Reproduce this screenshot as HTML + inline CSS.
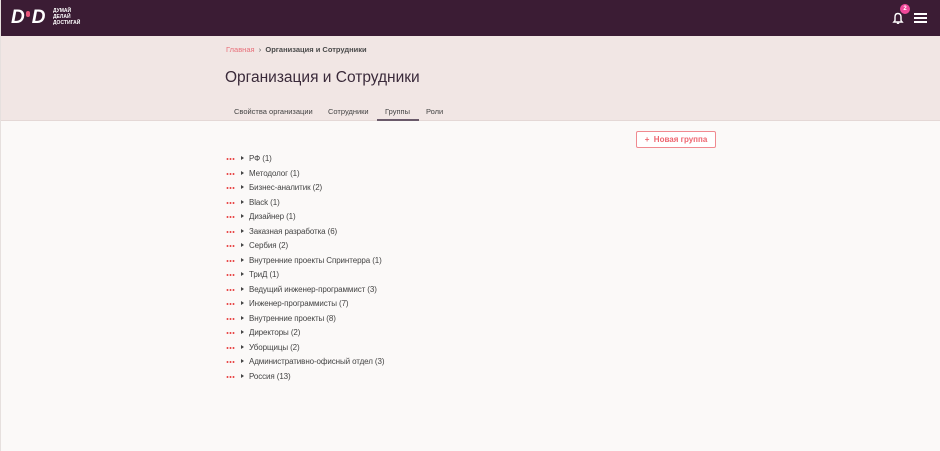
<!DOCTYPE html>
<html><head><meta charset="utf-8"><style>
*{margin:0;padding:0;box-sizing:border-box}
body{width:940px;height:451px;overflow:hidden;background:#fbf9f8;font-family:"Liberation Sans","DejaVu Sans",sans-serif;position:relative;border-left:1px solid #e6e0de}
.hdr{position:absolute;left:0;top:0;width:940px;height:36px;background:#3b1c34}
.logo{position:absolute;left:10px;top:8px;color:#fff;font-weight:bold;font-style:italic;font-size:19px;letter-spacing:-1px;line-height:20px}
.logo .dot{display:inline-block;width:4px;height:6px;background:#e8567a;border-radius:2px;margin:0 2px;vertical-align:6px}
.tag{position:absolute;left:52px;top:8px;color:#fff;font-size:5px;line-height:6px;font-weight:bold}
.band{position:absolute;left:0;top:36px;width:940px;height:85px;background:#f1e6e4;border-bottom:1px solid #e4d8d6}
.bc{position:absolute;left:225px;top:45px;font-size:7.5px;color:#555}
.bc a{color:#e8707a}
.bc b{color:#4a4a4a}
h1{position:absolute;left:224px;top:69px;font-weight:normal;font-size:15.5px;color:#3a2a3a}
.tabs{position:absolute;left:225px;top:107px;font-size:7.5px;color:#444}
.tabs span{position:absolute;white-space:nowrap}
.ul{position:absolute;left:376px;top:119px;width:42px;height:2px;background:#6a5a6a}
.btn{position:absolute;left:635px;top:131px;width:80px;height:17px;border:1px solid #f08a90;border-radius:2px;color:#ee6670;font-size:8px;font-weight:bold;text-align:center;line-height:15px;background:#fff}
.row{position:absolute;left:225px;font-size:8px;color:#444;height:10px;line-height:10px}
.row .d{position:absolute;left:0;top:4px;width:9px;height:2px;background:radial-gradient(circle,#e84a4a 0.9px,transparent 1.1px) 0 0/3px 2px repeat-x}
.row .t{position:absolute;left:15px;top:2px;width:0;height:0;border-left:3px solid #444;border-top:2.5px solid transparent;border-bottom:2.5px solid transparent}
.row .x{position:absolute;left:23px;top:0;white-space:nowrap;letter-spacing:-0.1px}
</style></head><body>
<div class="hdr">
<div class="logo">D<span class="dot"></span>D</div>
<div class="tag">ДУМАЙ<br>ДЕЛАЙ<br>ДОСТИГАЙ</div>
<svg style="position:absolute;left:891px;top:12px" width="12" height="13" viewBox="0 0 12 13"><path d="M6 1.5C3.8 1.5 3 3.2 3 5v3.5L1.8 10h8.4L9 8.5V5c0-1.8-.8-3.5-3-3.5z" fill="none" stroke="#fff" stroke-width="1.4"/><path d="M4.8 11.3h2.4" stroke="#fff" stroke-width="1.3"/></svg>
<div style="position:absolute;left:899px;top:4px;width:10px;height:10px;border-radius:50%;background:#f0489a;color:#fff;font-size:6px;text-align:center;line-height:10px;font-weight:bold">2</div>
<div style="position:absolute;left:913px;top:13px;width:13px;height:2px;background:#fff;box-shadow:0 4px 0 #fff,0 8px 0 #fff"></div>
</div>
<div class="band"></div>
<div class="bc"><a>Главная</a> &nbsp;›&nbsp; <b>Организация и Сотрудники</b></div>
<h1>Организация и Сотрудники</h1>
<div class="tabs">
<span style="left:8px">Свойства организации</span>
<span style="left:102px">Сотрудники</span>
<span style="left:159px">Группы</span>
<span style="left:200px">Роли</span>
</div>
<div class="ul"></div>
<div class="btn">+&nbsp; Новая группа</div>

<div class="row" style="top:154px"><i class="d"></i><i class="t"></i><span class="x">РФ (1)</span></div>
<div class="row" style="top:168.5px"><i class="d"></i><i class="t"></i><span class="x">Методолог (1)</span></div>
<div class="row" style="top:183px"><i class="d"></i><i class="t"></i><span class="x">Бизнес-аналитик (2)</span></div>
<div class="row" style="top:197.5px"><i class="d"></i><i class="t"></i><span class="x">Black (1)</span></div>
<div class="row" style="top:212px"><i class="d"></i><i class="t"></i><span class="x">Дизайнер (1)</span></div>
<div class="row" style="top:226.5px"><i class="d"></i><i class="t"></i><span class="x">Заказная разработка (6)</span></div>
<div class="row" style="top:241px"><i class="d"></i><i class="t"></i><span class="x">Сербия (2)</span></div>
<div class="row" style="top:255.5px"><i class="d"></i><i class="t"></i><span class="x">Внутренние проекты Спринтерра (1)</span></div>
<div class="row" style="top:270px"><i class="d"></i><i class="t"></i><span class="x">ТриД (1)</span></div>
<div class="row" style="top:284.5px"><i class="d"></i><i class="t"></i><span class="x">Ведущий инженер-программист (3)</span></div>
<div class="row" style="top:299px"><i class="d"></i><i class="t"></i><span class="x">Инженер-программисты (7)</span></div>
<div class="row" style="top:313.5px"><i class="d"></i><i class="t"></i><span class="x">Внутренние проекты (8)</span></div>
<div class="row" style="top:328px"><i class="d"></i><i class="t"></i><span class="x">Директоры (2)</span></div>
<div class="row" style="top:342.5px"><i class="d"></i><i class="t"></i><span class="x">Уборщицы (2)</span></div>
<div class="row" style="top:357px"><i class="d"></i><i class="t"></i><span class="x">Административно-офисный отдел (3)</span></div>
<div class="row" style="top:371.5px"><i class="d"></i><i class="t"></i><span class="x">Россия (13)</span></div>
</body></html>
